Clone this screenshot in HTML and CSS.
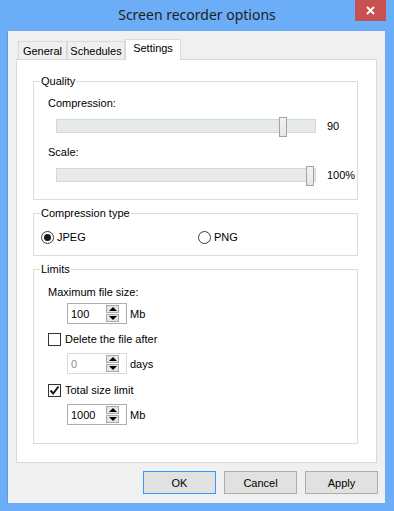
FILE: index.html
```html
<!DOCTYPE html>
<html lang="en">
<head>
    <meta charset="UTF-8">
    <title>Screen recorder options</title>
    <link rel="stylesheet" href="styles.css">
</head>
<body>
    <div class="window">
        <div class="titlebar">
            <div class="title">Screen recorder options</div>
            <div class="close">
                <svg width="9" height="9" viewBox="0 0 9 9"><path d="M1 1L8 8M8 1L1 8" stroke="#fff" stroke-width="2"/></svg>
            </div>
        </div>
        <div class="client">
            <div class="tabs">
                <div class="tab tab-general">General</div>
                <div class="tab tab-schedules">Schedules</div>
                <div class="tab tab-active">Settings</div>
            </div>
            <div class="panel">
                <fieldset class="group group-quality">
                    <legend>Quality</legend>
                    <div class="field-label">Compression:</div>
                    <div class="slider-row">
                        <div class="track"><div class="thumb" style="left: 222px"></div></div>
                        <span class="slider-value">90</span>
                    </div>
                    <div class="field-label second">Scale:</div>
                    <div class="slider-row">
                        <div class="track"><div class="thumb" style="left: 249px"></div></div>
                        <span class="slider-value">100%</span>
                    </div>
                </fieldset>

                <fieldset class="group group-type">
                    <legend>Compression type</legend>
                    <div class="radio-row">
                        <label class="option"><span class="radio checked"></span>JPEG</label>
                        <label class="option"><span class="radio"></span>PNG</label>
                    </div>
                </fieldset>

                <fieldset class="group group-limits">
                    <legend>Limits</legend>
                    <div class="field-label">Maximum file size:</div>
                    <div class="spin-row">
                        <div class="spin">
                            <span class="spin-value">100</span>
                            <span class="spin-btns"><span class="spin-btn up"></span><span class="spin-btn down"></span></span>
                        </div>
                        <span class="unit">Mb</span>
                    </div>
                    <label class="check"><span class="box"></span>Delete the file after</label>
                    <div class="spin-row">
                        <div class="spin disabled">
                            <span class="spin-value">0</span>
                            <span class="spin-btns"><span class="spin-btn up"></span><span class="spin-btn down"></span></span>
                        </div>
                        <span class="unit">days</span>
                    </div>
                    <label class="check check-total"><span class="box"><svg width="11" height="11" viewBox="0 0 11 11"><path d="M1.5 5.5L4.2 8.5L9.5 1.5" fill="none" stroke="#1a1a1a" stroke-width="2"/></svg></span>Total size limit</label>
                    <div class="spin-row">
                        <div class="spin">
                            <span class="spin-value">1000</span>
                            <span class="spin-btns"><span class="spin-btn up"></span><span class="spin-btn down"></span></span>
                        </div>
                        <span class="unit">Mb</span>
                    </div>
                </fieldset>
            </div>
            <div class="buttons">
                <button class="btn btn-default">OK</button>
                <button class="btn">Cancel</button>
                <button class="btn">Apply</button>
            </div>
        </div>
    </div>
</body>
</html>
```

FILE: styles.css
```css
body {
    margin: 0;
    font-family: "Liberation Sans", Arial, sans-serif;
    font-size: 11px;
    color: #000;
}

.window {
    width: 394px;
    height: 511px;
    background-color: #6badf6;
    display: flex;
    flex-direction: column;
}

.titlebar {
    height: 31px;
    display: grid;
    grid-template-columns: 1fr auto 1fr;
}

.title {
    grid-column: 2;
    font-family: "Noto Sans", sans-serif;
    font-size: 14px;
    line-height: 30px;
    color: #1e1e1e;
}

.close {
    grid-column: 3;
    justify-self: end;
    width: 31px;
    height: 21px;
    margin-right: 8px;
    background-color: #c75050;
    display: flex;
    align-items: center;
    justify-content: center;
}

.client {
    flex: 1;
    margin: 0 9px 8px 7px;
    border-left: 1px solid #5b9be4;
    background-color: #f0f0f0;
    padding: 8px 8px 9px;
    display: flex;
    flex-direction: column;
}

/* tabs */
.tabs {
    display: flex;
    align-items: flex-end;
    height: 21px;
    padding-left: 2px;
    margin-bottom: -1px;
    position: relative;
    z-index: 1;
}

.tab {
    height: 18px;
    box-sizing: border-box;
    border: 1px solid #d9d9d9;
    border-bottom: 0;
    line-height: 18px;
    text-align: center;
    background-color: #f0f0f0;
    margin-bottom: 1px;
}

.tab-general {
    width: 49px;
}

.tab-schedules {
    width: 58px;
}

.tab-active {
    width: 56px;
    height: 21px;
    background-color: #fff;
    margin-bottom: 0;
    line-height: 17px;
}

.panel {
    flex: 1;
    background-color: #fff;
    border: 1px solid #d9d9d9;
    padding: 13px 18px 0 16px;
}

/* group boxes */
.group {
    margin: 0;
    min-width: 0;
    border: 1px solid #dcdcdc;
    padding: 6px 0 14px 6px;
}

.group legend {
    padding: 0 1px;
    line-height: 16px;
}

.group-type {
    margin-top: 5px;
    padding-top: 8px;
    padding-bottom: 10px;
}

.group-limits {
    margin-top: 5px;
    padding-top: 7px;
    padding-bottom: 18px;
}

.field-label {
    margin-left: 8px;
    line-height: 16px;
}

.field-label.second {
    margin-top: 8px;
}

/* sliders */
.slider-row {
    display: flex;
    align-items: center;
    height: 20px;
    margin-top: 5px;
    margin-left: 16px;
}

.track {
    position: relative;
    width: 260px;
    height: 14px;
    box-sizing: border-box;
    border: 1px solid #d6d6d6;
    background-color: #e7eaea;
}

.thumb {
    position: absolute;
    top: -3px;
    width: 8px;
    height: 20px;
    box-sizing: border-box;
    border: 1px solid #a3a3a3;
    background: linear-gradient(#f2f2f2, #e6e6e6);
}

.slider-value {
    margin-left: 11px;
}

/* radios */
.radio-row {
    display: grid;
    grid-template-columns: 157px auto;
    margin-left: 1px;
}

.option,
.check {
    display: flex;
    align-items: center;
    gap: 3px;
    line-height: 16px;
}

.radio {
    width: 13px;
    height: 13px;
    box-sizing: border-box;
    border: 1px solid #3a3a3a;
    border-radius: 50%;
    background-color: #fff;
    display: flex;
    align-items: center;
    justify-content: center;
}

.radio.checked::after {
    content: "";
    width: 7px;
    height: 7px;
    border-radius: 50%;
    background-color: #1a1a1a;
}

/* checkboxes */
.check {
    margin-left: 8px;
    margin-top: 7px;
    gap: 4px;
}

.check-total {
    margin-top: 8px;
}

.box {
    width: 13px;
    height: 13px;
    box-sizing: border-box;
    border: 1px solid #333;
    background-color: #fff;
    display: flex;
    align-items: center;
    justify-content: center;
}

/* spin boxes */
.spin-row {
    display: flex;
    align-items: center;
    margin-left: 27px;
    margin-top: 3px;
}

.check + .spin-row {
    margin-top: 6px;
}

.spin {
    width: 60px;
    height: 21px;
    box-sizing: border-box;
    border: 1px solid #abadb3;
    background-color: #fff;
    padding: 0 7px 0 3px;
    display: flex;
    align-items: center;
}

.spin.disabled {
    border-color: #d9d9d9;
}

.spin.disabled .spin-value {
    color: #8d8d8d;
}

.spin-value {
    flex: 1;
}

.spin-btns {
    display: flex;
    flex-direction: column;
    gap: 1px;
}

.spin-btn {
    width: 13px;
    height: 8px;
    box-sizing: border-box;
    border: 1px solid #a8a8a8;
    background-color: #e6e6e6;
    display: flex;
    align-items: center;
    justify-content: center;
}

.spin-btn.up::before {
    content: "";
    border-left: 4px solid transparent;
    border-right: 4px solid transparent;
    border-bottom: 4px solid #000;
}

.spin-btn.down::before {
    content: "";
    border-left: 4px solid transparent;
    border-right: 4px solid transparent;
    border-top: 4px solid #000;
}

.unit {
    margin-left: 3px;
}

/* dialog buttons */
.buttons {
    display: flex;
    justify-content: flex-end;
    gap: 8px;
    margin-top: 8px;
    margin-right: -1px;
}

.btn {
    width: 73px;
    height: 23px;
    border: 1px solid #adadad;
    background-color: #e1e1e1;
    font-family: inherit;
    font-size: 11px;
    color: #000;
    padding: 0;
}

.btn-default {
    border-color: #3399ff;
}
```
